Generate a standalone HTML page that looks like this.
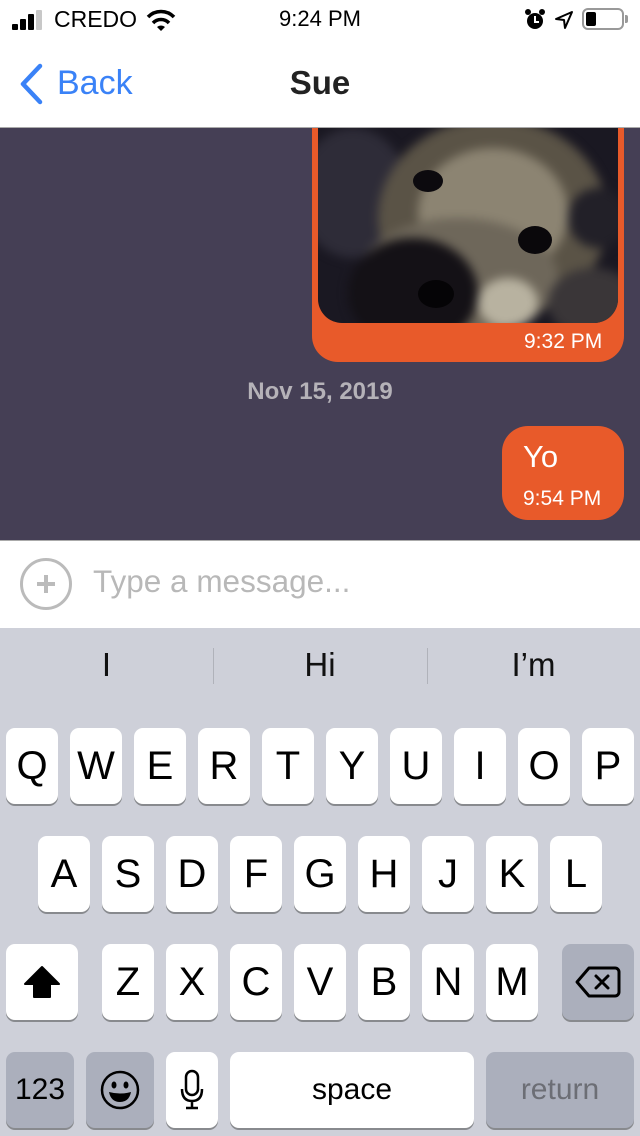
<!DOCTYPE html>
<html><head><meta charset="utf-8"><style>
*{margin:0;padding:0;box-sizing:border-box}
body{width:640px;height:1136px;overflow:hidden;font-family:"Liberation Sans",sans-serif;background:#fff;position:relative}
.a{position:absolute}
.b{position:absolute;border-radius:50%}
.k{position:absolute;background:#fff;border-radius:9px;box-shadow:0 2px 0 #888a8e;font-size:40px;color:#000;display:flex;align-items:center;justify-content:center;height:76px;width:52px}
.g{background:#abafbc}
</style></head><body>
<!-- status bar -->
<div class="a" style="left:12px;top:24px;width:6px;height:6px;background:#000;border-radius:1px"></div>
<div class="a" style="left:20px;top:19px;width:6px;height:11px;background:#000;border-radius:1px"></div>
<div class="a" style="left:28px;top:14px;width:6px;height:16px;background:#000;border-radius:1px"></div>
<div class="a" style="left:36px;top:10px;width:6px;height:20px;background:#c8c8c8;border-radius:1px"></div>
<div class="a" style="left:54px;top:6px;font-size:23px">CREDO</div>
<svg class="a" style="left:146px;top:9px" width="30" height="24" viewBox="0 0 30 24"><path d="M15 22 L19 18 A6 6 0 0 0 11 18 Z" fill="#000"/><path d="M7 14 A11 11 0 0 1 23 14" stroke="#000" stroke-width="3.5" fill="none"/><path d="M2 8 A18 18 0 0 1 28 8" stroke="#000" stroke-width="3.5" fill="none"/></svg>
<div class="a" style="left:0;width:640px;top:6px;text-align:center;font-size:22px">9:24 PM</div>
<svg class="a" style="left:524px;top:8px" width="22" height="24" viewBox="0 0 22 24"><circle cx="11" cy="13" r="8" fill="#000"/><circle cx="4" cy="4" r="3" fill="#000"/><circle cx="18" cy="4" r="3" fill="#000"/><path d="M11 8v6h4" stroke="#fff" stroke-width="2" fill="none"/></svg>
<svg class="a" style="left:554px;top:10px" width="20" height="20" viewBox="0 0 20 20"><path d="M18 2 L2 9 L10 10 L11 18 Z" stroke="#000" stroke-width="2" fill="none" stroke-linejoin="round"/></svg>
<div class="a" style="left:582px;top:8px;width:42px;height:22px;border:2px solid #999;border-radius:6px"></div>
<div class="a" style="left:586px;top:12px;width:10px;height:14px;background:#000;border-radius:2px"></div>
<div class="a" style="left:625px;top:15px;width:3px;height:8px;background:#999;border-radius:0 2px 2px 0"></div>
<!-- nav -->
<svg class="a" style="left:18px;top:63px" width="26" height="42" viewBox="0 0 26 42"><path d="M22 3 L5 21 L22 39" stroke="#3a82f7" stroke-width="4.5" fill="none" stroke-linecap="round" stroke-linejoin="round"/></svg>
<div class="a" style="left:57px;top:64px;font-size:34px;color:#3a82f7">Back</div>
<div class="a" style="left:0;width:640px;top:64px;text-align:center;font-size:33px;font-weight:bold;color:#222">Sue</div>
<div class="a" style="left:0;top:127px;width:640px;height:1px;background:#aaa"></div>
<!-- chat -->
<div class="a" style="left:0;top:128px;width:640px;height:412px;background:#453f55;overflow:hidden">
 <div class="a" style="left:312px;top:-30px;width:312px;height:264px;background:#e85a2a;border-radius:26px"></div>
 <div class="a" style="left:318px;top:-30px;width:300px;height:225px;border-radius:24px;overflow:hidden;background:#1a1822">
  <div class="a" style="left:0;top:30px;width:300px;height:195px;filter:blur(5px)">
   <div class="b" style="left:-20px;top:0;width:110px;height:130px;background:#2e2c38"></div>
   <div class="b" style="left:60px;top:-10px;width:230px;height:200px;background:#5a5346"></div>
   <div class="b" style="left:100px;top:20px;width:150px;height:130px;background:#8c8472"></div>
   <div class="b" style="left:40px;top:90px;width:200px;height:120px;background:#6e675a"></div>
   <div class="b" style="left:30px;top:110px;width:130px;height:110px;background:#141116"></div>
   <div class="b" style="left:230px;top:140px;width:90px;height:70px;background:#3a3638"></div>
   <div class="b" style="left:250px;top:60px;width:60px;height:60px;background:#222028"></div>
   <div class="b" style="left:160px;top:150px;width:60px;height:50px;background:#b8b2a0"></div>
  </div>
  <div class="b" style="left:95px;top:72px;width:30px;height:22px;background:#0c0a0e"></div>
  <div class="b" style="left:200px;top:128px;width:34px;height:28px;background:#0a080b"></div>
  <div class="b" style="left:100px;top:182px;width:36px;height:28px;background:#050406"></div>
 </div>
 <div class="a" style="left:524px;top:202px;font-size:21px;color:#fff">9:32 PM</div>
 <div class="a" style="left:0;width:640px;top:250px;text-align:center;font-size:24px;font-weight:bold;color:#b5b2b8">Nov 15, 2019</div>
 <div class="a" style="left:502px;top:298px;width:122px;height:94px;background:#e85a2a;border-radius:26px"></div>
 <div class="a" style="left:523px;top:311px;font-size:31px;color:#fff">Yo</div>
 <div class="a" style="left:523px;top:359px;font-size:21px;color:#fff">9:54 PM</div>
</div>
<div class="a" style="left:0;top:540px;width:640px;height:1px;background:#aaa"></div>
<!-- input -->
<div class="a" style="left:20px;top:558px;width:52px;height:52px;border:3px solid #bbb;border-radius:50%"></div>
<div class="a" style="left:37px;top:582px;width:18px;height:4px;background:#bbb"></div>
<div class="a" style="left:44px;top:575px;width:4px;height:18px;background:#bbb"></div>
<div class="a" style="left:93px;top:563px;font-size:31.5px;color:#b8b8b8">Type a message...</div>
<!-- keyboard -->
<div class="a" style="left:0;top:628px;width:640px;height:508px;background:#ced0d9">
 <div class="a" style="left:0;width:213px;top:18px;text-align:center;font-size:33px;color:#111">I</div>
 <div class="a" style="left:213px;top:20px;width:1px;height:36px;background:#b0b2ba"></div>
 <div class="a" style="left:213px;width:214px;top:18px;text-align:center;font-size:33px;color:#111">Hi</div>
 <div class="a" style="left:427px;top:20px;width:1px;height:36px;background:#b0b2ba"></div>
 <div class="a" style="left:427px;width:213px;top:18px;text-align:center;font-size:33px;color:#111">I’m</div>
</div>
<div class="k" style="left:6px;top:728px">Q</div><div class="k" style="left:70px;top:728px">W</div><div class="k" style="left:134px;top:728px">E</div><div class="k" style="left:198px;top:728px">R</div><div class="k" style="left:262px;top:728px">T</div><div class="k" style="left:326px;top:728px">Y</div><div class="k" style="left:390px;top:728px">U</div><div class="k" style="left:454px;top:728px">I</div><div class="k" style="left:518px;top:728px">O</div><div class="k" style="left:582px;top:728px">P</div>
<div class="k" style="left:38px;top:836px">A</div><div class="k" style="left:102px;top:836px">S</div><div class="k" style="left:166px;top:836px">D</div><div class="k" style="left:230px;top:836px">F</div><div class="k" style="left:294px;top:836px">G</div><div class="k" style="left:358px;top:836px">H</div><div class="k" style="left:422px;top:836px">J</div><div class="k" style="left:486px;top:836px">K</div><div class="k" style="left:550px;top:836px">L</div>
<div class="k" style="left:6px;top:944px;width:72px"><svg width="40" height="36" viewBox="0 0 40 36"><path d="M20 3 L37 20 L28 20 L28 33 L12 33 L12 20 L3 20 Z" fill="#000" stroke="#000" stroke-linejoin="round" stroke-width="2"/></svg></div>
<div class="k" style="left:102px;top:944px">Z</div><div class="k" style="left:166px;top:944px">X</div><div class="k" style="left:230px;top:944px">C</div><div class="k" style="left:294px;top:944px">V</div><div class="k" style="left:358px;top:944px">B</div><div class="k" style="left:422px;top:944px">N</div><div class="k" style="left:486px;top:944px">M</div>
<div class="k g" style="left:562px;top:944px;width:72px"><svg width="46" height="34" viewBox="0 0 46 34"><path d="M14 3 H40 A4 4 0 0 1 44 7 V27 A4 4 0 0 1 40 31 H14 L2 17 Z" fill="none" stroke="#000" stroke-width="3" stroke-linejoin="round"/><path d="M21 11 L33 23 M33 11 L21 23" stroke="#000" stroke-width="3" stroke-linecap="round"/></svg></div>
<div class="k g" style="left:6px;top:1052px;width:68px;font-size:30px">123</div>
<div class="k g" style="left:86px;top:1052px;width:68px"><svg width="42" height="42" viewBox="0 0 42 42"><circle cx="21" cy="21" r="18" fill="none" stroke="#000" stroke-width="2.5"/><ellipse cx="15" cy="16" rx="2.5" ry="3.5"/><ellipse cx="27" cy="16" rx="2.5" ry="3.5"/><path d="M10 23 Q21 26 32 23 Q30 33 21 33 Q12 33 10 23 Z"/></svg></div>
<div class="k" style="left:166px;top:1052px"><svg width="24" height="42" viewBox="0 0 24 42"><rect x="6" y="2" width="12" height="24" rx="6" fill="none" stroke="#000" stroke-width="2.5"/><path d="M2 20 Q2 32 12 32 Q22 32 22 20 M12 32 V39 M6 39 H18" fill="none" stroke="#000" stroke-width="2.5"/></svg></div>
<div class="k" style="left:230px;top:1052px;width:244px;font-size:30px">space</div>
<div class="k g" style="left:486px;top:1052px;width:148px;font-size:30px;color:#6c6e75">return</div>
</body></html>
